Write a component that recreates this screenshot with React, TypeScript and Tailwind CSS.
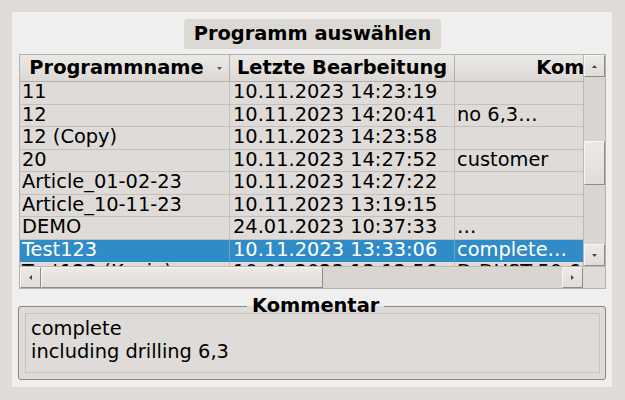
import React from "react";

const rows: [string, string, string][] = [
  ["11", "10.11.2023 14:23:19", ""],
  ["12", "10.11.2023 14:20:41", "no 6,3…"],
  ["12 (Copy)", "10.11.2023 14:23:58", ""],
  ["20", "10.11.2023 14:27:52", "customer"],
  ["Article_01-02-23", "10.11.2023 14:27:22", ""],
  ["Article_10-11-23", "10.11.2023 13:19:15", ""],
  ["DEMO", "24.01.2023 10:37:33", "…"],
  ["Test123", "10.11.2023 13:33:06", "complete…"],
  ["Test123 (Kopie)", "10.01.2023 13:12:56", "D-DUST-50 6…"],
];

const selectedIndex = 7;

function Arrow({ dir }: { dir: "up" | "down" | "left" | "right" }) {
  const points = {
    up: "0,3 5,3 2.5,0",
    down: "0,0 5,0 2.5,3",
    left: "3,0 3,5 0,2.5",
    right: "0,0 0,5 3,2.5",
  }[dir];
  const vertical = dir === "up" || dir === "down";
  return (
    <svg
      width={vertical ? 5 : 3}
      height={vertical ? 3 : 5}
      viewBox={vertical ? "0 0 5 3" : "0 0 3 5"}
    >
      <polygon points={points} fill="#4a4846" />
    </svg>
  );
}

const raised =
  "bg-linear-to-b from-[#eceae7] to-[#e0ddd9] border-t border-l border-t-[#f6f5f3] border-l-[#f6f5f3] border-b border-r border-b-[#8f8b87] border-r-[#8f8b87]";

function VScrollBar() {
  return (
    <div className="w-[22px] shrink-0 flex flex-col bg-[#d9d6d2] border-l border-[#bcb8b4]">
      <div className={`h-[22px] shrink-0 flex items-center justify-center ${raised}`}>
        <Arrow dir="up" />
      </div>
      <div className="flex-1 min-h-0">
        <div className={`mt-[64px] h-[44px] ${raised}`} />
      </div>
      <div className={`h-[22px] shrink-0 flex items-center justify-center ${raised}`}>
        <Arrow dir="down" />
      </div>
    </div>
  );
}

function HScrollBar() {
  return (
    <div className="h-[22px] shrink-0 flex border-t border-[#bcb8b4]">
      <div className="flex-1 flex bg-[#d9d6d2]">
        <div className={`w-[21px] shrink-0 flex items-center justify-center ${raised}`}>
          <Arrow dir="left" />
        </div>
        <div className="flex-1 min-w-0">
          <div className={`w-[282px] h-full ${raised}`} />
        </div>
        <div className={`w-[21px] shrink-0 flex items-center justify-center ${raised}`}>
          <Arrow dir="right" />
        </div>
      </div>
      <div className="w-[22px] shrink-0 bg-[#dedbd8]" />
    </div>
  );
}

function ProgramTable() {
  return (
    <div className="mt-[5px] h-[235px] shrink-0 border border-[#b5b1ad] flex flex-col bg-[#dedbd8]">
      <div className="flex flex-1 min-h-0">
        <div className="flex-1 min-w-0 overflow-hidden">
          {/* header */}
          <div className="flex w-[900px] h-[27px] font-bold bg-linear-to-b from-[#ebe9e6] to-[#dcd9d5] border-b border-[#b3afab]">
            <div className="w-[210px] shrink-0 flex items-center border-r border-[#b3afab]">
              <span className="flex-1 text-center whitespace-nowrap">Programmname</span>
              <span className="ml-[4px] mr-[7px] flex">
                <svg width="5" height="3" viewBox="0 0 5 3">
                  <polygon points="0,0 5,0 2.5,3" fill="#5a5856" />
                </svg>
              </span>
            </div>
            <div className="w-[225px] shrink-0 flex items-center justify-center border-r border-[#b3afab] whitespace-nowrap">
              Letzte Bearbeitung
            </div>
            <div className="w-[291px] shrink-0 flex items-center justify-center border-r border-[#b3afab] whitespace-nowrap">
              Kommentar
            </div>
          </div>
          {/* rows */}
          {rows.map((r, i) => {
            const sel = i === selectedIndex;
            const cell = sel
              ? "border-r border-[#6fa3ca] bg-[#308cc6] text-white"
              : "border-r border-[#c4c1bd]";
            return (
              <div
                key={i}
                className={`flex w-[900px] h-[22.5px] border-b ${sel ? "border-[#308cc6]" : "border-[#c4c1bd]"}`}
              >
                <div className={`w-[210px] shrink-0 pl-[2px] flex items-center whitespace-nowrap overflow-hidden ${cell}`}>
                  {r[0]}
                </div>
                <div className={`w-[225px] shrink-0 pl-[3px] flex items-center whitespace-nowrap overflow-hidden ${cell}`}>
                  {r[1]}
                </div>
                <div className={`w-[291px] shrink-0 pl-[2px] flex items-center whitespace-nowrap overflow-hidden ${cell}`}>
                  {r[2]}
                </div>
              </div>
            );
          })}
        </div>
        <VScrollBar />
      </div>
      <HScrollBar />
    </div>
  );
}

export default function App() {
  return (
    <div className="w-[625px] h-[400px] bg-[#dedbd8] pt-3 pl-3 pr-[13px] pb-[13px] font-['DejaVu_Sans',sans-serif] text-[19.4px] leading-[22.6px] text-black">
      <div className="h-full bg-[#efefef] flex flex-col pt-[7px] pl-[7px] pr-[6px]">
        <div className="self-center h-[30px] shrink-0 px-[10px] rounded-[3px] bg-[#dcd9d5] font-bold leading-[30px] whitespace-nowrap">
          Programm auswählen
        </div>

        <ProgramTable />

        <fieldset className="mt-[9px] -ml-px border border-[#8a8784] rounded-[3px] bg-[#dedbd8] pl-[6px] pr-[5px] pb-[6px]">
          <legend className="ml-[222px] px-[5px] font-bold leading-[16px] whitespace-nowrap">
            Kommentar
          </legend>
          <div className="-mt-px h-[60px] border border-[#c6c3bf] bg-[#dedbd8] pl-[5px] pt-[4px] leading-[22.6px]">
            <div>complete</div>
            <div>including drilling 6,3</div>
          </div>
        </fieldset>
      </div>
    </div>
  );
}
